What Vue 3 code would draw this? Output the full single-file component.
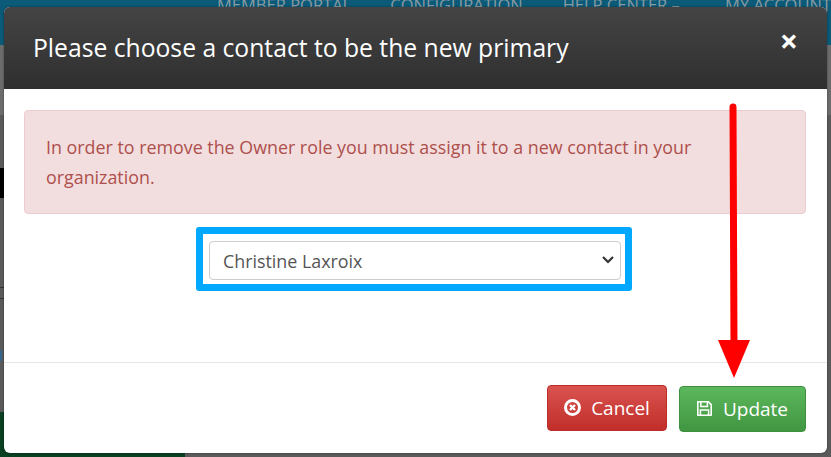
<template>
  <div class="page">
    <!-- dimmed page behind the dialog -->
    <div class="backdrop">
      <nav class="topnav">
        <span class="nav-member">MEMBER PORTAL</span>
        <span class="nav-config">CONFIGURATION</span>
        <span class="nav-help">HELP CENTER &ndash;</span>
        <span>MY ACCOUNT</span>
      </nav>
      <div class="band"></div>
      <div class="side-black"></div>
      <div class="side-line"></div>
      <div class="side-blue"></div>
      <div class="foot-green"></div>
    </div>

    <div class="modal">
      <header class="modal-header">
        <h1>{{ title }}</h1>
        <span class="close">&times;</span>
      </header>

      <div class="modal-body">
        <div class="alert">{{ message }}</div>
        <div class="select-wrap">
          <div class="highlight">
            <select v-model="contact" class="contact-select">
              <option v-for="c in contacts" :key="c">{{ c }}</option>
            </select>
            <svg class="chevron" viewBox="0 0 14 9" width="14" height="9">
              <path d="M2 2l5 5 5-5" fill="none" stroke="#333" stroke-width="2.2" />
            </svg>
          </div>
        </div>
      </div>

      <footer class="modal-footer">
        <button class="btn btn-cancel">
          <svg viewBox="0 0 17 17" width="17" height="17">
            <circle cx="8.5" cy="8.5" r="7" fill="none" stroke="currentColor" stroke-width="3" />
            <path d="M6 6l5 5M11 6l-5 5" stroke="currentColor" stroke-width="2.4" />
          </svg>
          Cancel
        </button>
        <button class="btn btn-update">
          <svg viewBox="0 0 17 17" width="17" height="17">
            <path d="M1.8 1.8h10.6l2.8 2.8v10.6H1.8z" fill="none" stroke="currentColor" stroke-width="1.6" stroke-linejoin="round" />
            <path d="M4.8 2v4.4h6.6V2M4.4 15V10h8.2v5" fill="none" stroke="currentColor" stroke-width="1.5" />
          </svg>
          Update
        </button>
      </footer>

      <svg class="arrow" viewBox="0 0 36 276" width="36" height="276">
        <path d="M17 5L18 242" stroke="#ff0000" stroke-width="7" stroke-linecap="round" fill="none" />
        <path d="M2 238h32l-16 38z" fill="#ff0000" />
      </svg>
    </div>
  </div>
</template>

<script setup>
import { ref } from 'vue'

const title = 'Please choose a contact to be the new primary'
const message = 'In order to remove the Owner role you must assign it to a new contact in your organization.'
const contacts = ['Christine Laxroix']
const contact = ref(contacts[0])
</script>

<style>
html, body { margin: 0; background: #555; overflow: hidden; }
</style>

<style scoped>
.page {
  position: relative;
  width: 831px;
  height: 457px;
  overflow: hidden;
  box-sizing: border-box;
  padding: 7px 4px 4px;
  font-family: "Open Sans", "Noto Sans", sans-serif;
}
.backdrop { position: absolute; inset: 0; background: #5a5a5a; }
.topnav {
  height: 45px;
  background: #0b5a78;
  color: #8a9aa3;
  font-size: 16.5px;
  line-height: 10px;
  display: flex;
  padding-left: 217px;
  white-space: nowrap;
  overflow: hidden;
}
.nav-member { width: 174px; }
.nav-config { width: 173px; }
.nav-help { width: 163px; }
.band { height: 70px; background: #6c6c6c; }
.side-black { position: absolute; left: 0; top: 168px; width: 4px; height: 30px; background: #000; }
.side-line { position: absolute; left: 0; top: 287px; width: 4px; height: 12px; border-top: 1px solid #333; border-bottom: 1px solid #333; box-sizing: border-box; }
.side-blue { position: absolute; left: 0; top: 350px; width: 2px; height: 11px; background: #35658a; }
.foot-green { position: absolute; left: 0; top: 412px; width: 185px; height: 45px; background: #0a3f22; }

.modal {
  position: relative;
  height: 446px;
  background: #fff;
  border-radius: 6px;
  display: flex;
  flex-direction: column;
  box-shadow: 0 0 2px rgba(0, 0, 0, .5);
}
.modal-header {
  height: 82px;
  flex: none;
  box-sizing: border-box;
  padding: 0 29px;
  display: flex;
  justify-content: space-between;
  background: linear-gradient(#444, #2f2f2f);
  border-radius: 6px 6px 0 0;
  color: #fff;
}
.modal-header h1 {
  margin: 0;
  font-size: 24.7px;
  font-weight: 400;
  line-height: 82px;
}
.close { font-size: 32px; font-weight: 700; line-height: 67px; margin-right: 0; }
.modal-body {
  flex: 1;
  padding: 21px 21px 0 20px;
}
.alert {
  box-sizing: border-box;
  height: 104px;
  padding: 21px 21px;
  background: #f2dede;
  border: 1px solid #ebccd1;
  border-radius: 4px;
  color: #ae4f4c;
  font-size: 17.85px;
  line-height: 30px;
}
.select-wrap { display: flex; justify-content: center; margin-top: 13px; padding-right: 2px; }
.highlight {
  position: relative;
  box-sizing: border-box;
  width: 436px;
  height: 64px;
  border: 7px solid #00a8ff;
  padding: 0 4px 0 6px;
  display: flex;
  align-items: center;
  border-radius: 3px;
}
.contact-select {
  appearance: none;
  width: 100%;
  height: 39px;
  margin-top: 3px;
  padding: 0 13px;
  background-color: #fff;
  border: 1px solid #ccc;
  border-radius: 4px;
  color: #555;
  font: 17.85px "Open Sans", "Noto Sans", sans-serif;
}
.chevron { position: absolute; right: 10px; top: 21px; }
.modal-footer {
  flex: none;
  height: 91px;
  box-sizing: border-box;
  border-top: 1px solid #e5e5e5;
  padding: 22px 21px 0 0;
  display: flex;
  justify-content: flex-end;
  align-items: flex-start;
  gap: 12px;
}
.btn {
  display: flex;
  align-items: center;
  justify-content: center;
  gap: 10px;
  height: 46px;
  border-radius: 4px;
  color: #fff;
  font: 19px "Open Sans", "Noto Sans", sans-serif;
  padding: 0 0 1px;
}
.btn-cancel {
  width: 120px;
  background: linear-gradient(#d9534f, #c12e2a);
  border: 1px solid #b92c28;
}
.btn-update {
  width: 127px;
  margin-top: 1px;
  padding-right: 1px;
  background: linear-gradient(#5cb85c, #419641);
  border: 1px solid #3e8f3e;
}
.arrow { position: absolute; left: 712px; top: 95px; }
</style>
